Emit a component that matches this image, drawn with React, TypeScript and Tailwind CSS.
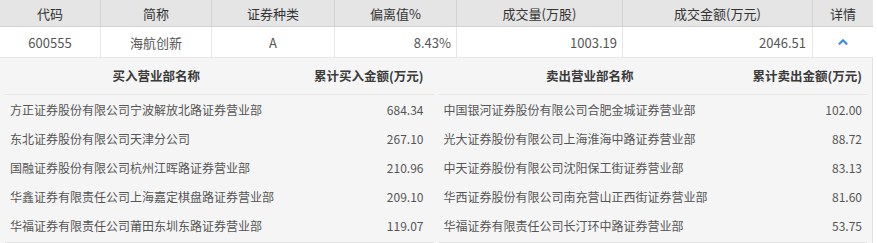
import { ChevronUp } from "lucide-react";

const buys = [
  ["方正证券股份有限公司宁波解放北路证券营业部", "684.34"],
  ["东北证券股份有限公司天津分公司", "267.10"],
  ["国融证券股份有限公司杭州江晖路证券营业部", "210.96"],
  ["华鑫证券有限责任公司上海嘉定棋盘路证券营业部", "209.10"],
  ["华福证券有限责任公司莆田东圳东路证券营业部", "119.07"],
] as const;

const sells = [
  ["中国银河证券股份有限公司合肥金城证券营业部", "102.00"],
  ["光大证券股份有限公司上海淮海中路证券营业部", "88.72"],
  ["中天证券股份有限公司沈阳保工街证券营业部", "83.13"],
  ["华西证券股份有限公司南充营山正西街证券营业部", "81.60"],
  ["华福证券有限责任公司长汀环中路证券营业部", "53.75"],
] as const;

const cols = [
  ["代码", "w-[101px]"],
  ["简称", "w-[111px]"],
  ["证券种类", "w-[123px]"],
  ["偏离值%", "w-[122px]"],
  ["成交量(万股)", "w-[166px]"],
  ["成交金额(万元)", "w-[190px]"],
  ["详情", "w-[60px]"],
] as const;

function DeptTable({ title, amountTitle, rows, pad }: { title: string; amountTitle: string; rows: readonly (readonly [string, string])[]; pad: string }) {
  return (
    <div className="flex-1 border-b border-[#e2e2e2]">
      <div className="flex h-[36px] items-center border-b border-[#e6e6e6] text-[12.5px] font-semibold text-[#3a3a3a]">
        <div className="flex-1 pl-[34px] text-center">{title}</div>
        <div className={`w-[160px] text-right ${pad}`}>{amountTitle}</div>
      </div>
      {rows.map(([name, amount]) => (
        <div key={name} className="flex h-[29px] items-center text-[#555]">
          <div className="flex-1 pl-[5px]">{name}</div>
          <div className={`w-[100px] text-right ${pad}`}>{amount}</div>
        </div>
      ))}
    </div>
  );
}

export default function App() {
  return (
    <div className="h-[243px] w-[877px] bg-white text-[12px] leading-none" style={{ fontFamily: '"Microsoft YaHei", "Noto Sans CJK SC", sans-serif' }}>
      <div className="w-[873px]">
        <div className="flex h-[27px] border-b border-[#d2d2d2] bg-[#e5e5e5] text-[13px] text-[#333]">
          {cols.map(([label, w], i) => (
            <div key={label} className={`${w} flex items-center justify-center ${i < cols.length - 1 ? "border-r border-[#d2d2d2]" : ""}`}>{label}</div>
          ))}
        </div>
        <div className="flex h-[31px] border-b border-[#e6e6e6] text-[13px] text-[#555]">
          <div className="flex w-[101px] items-center justify-center border-r border-[#e6e6e6]">600555</div>
          <div className="flex w-[111px] items-center justify-center border-r border-[#e6e6e6]">海航创新</div>
          <div className="flex w-[123px] items-center justify-center border-r border-[#e6e6e6]">A</div>
          <div className="flex w-[122px] items-center justify-end border-r border-[#e6e6e6] pr-[5px]">8.43%</div>
          <div className="flex w-[166px] items-center justify-end border-r border-[#e6e6e6] pr-[5px]">1003.19</div>
          <div className="flex w-[190px] items-center justify-end border-r border-[#e6e6e6] pr-[6px]">2046.51</div>
          <div className="flex w-[60px] items-center justify-center">
            <ChevronUp size={14} strokeWidth={4} className="text-[#3d8fd8]" />
          </div>
        </div>
        <div className="flex h-[185px] gap-[5px] border-r border-[#e2e2e2] bg-[#f5f5f5] px-[5px] pt-[1px] text-[12px]">
          <DeptTable title="买入营业部名称" amountTitle="累计买入金额(万元)" rows={buys} pad="pr-[10px]" />
          <DeptTable title="卖出营业部名称" amountTitle="累计卖出金额(万元)" rows={sells} pad="pr-[5px]" />
        </div>
      </div>
    </div>
  );
}
